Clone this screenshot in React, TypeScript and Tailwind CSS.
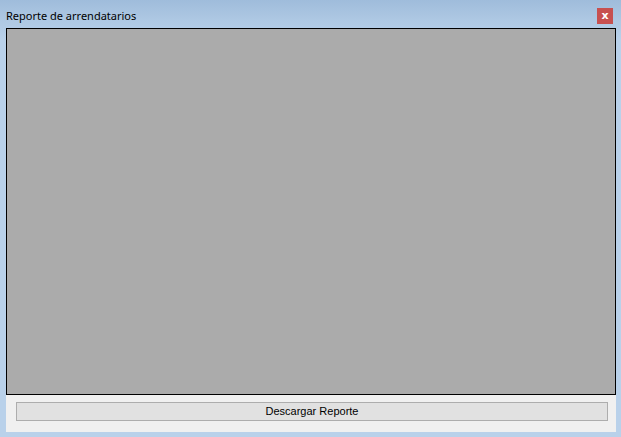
import React from "react";

export default function App() {
  return (
    <div className="w-[621px] h-[437px] flex flex-col bg-[linear-gradient(to_bottom,#9fbcdb_0px,#aec8e3_20px,#b9d1ea_40px,#b9d1ea_100%)] overflow-hidden">
      <div className="h-[28px] flex items-start shrink-0">
        <div
          className="pl-[6px] pt-[8px] text-[11px] leading-[15px] text-black"
          style={{ fontFamily: '"Segoe UI", "Noto Sans", "Open Sans", sans-serif' }}
        >
          Reporte de arrendatarios
        </div>
        <div className="ml-auto mr-[8px] mt-[8px] w-[16px] h-[16px] bg-[#c75050] flex items-center justify-center">
          <span
            className="text-white text-[11px] font-bold leading-none -mt-[1px]"
            style={{ fontFamily: '"DejaVu Sans", sans-serif' }}
          >
            x
          </span>
        </div>
      </div>
      <div className="ml-[6px] mr-[5px] mb-[5px] flex-1 bg-[#f0f0f0] flex flex-col">
        <div className="h-[367px] border border-black bg-[#ababab] shrink-0" />
        <div className="flex pl-[10px] pr-[8px] pt-[7px]">
          <div
            className="flex-1 h-[19px] border border-[#adadad] bg-[#e1e1e1] flex items-center justify-center text-[11px] text-black"
            style={{ fontFamily: '"Liberation Sans", Arial, sans-serif' }}
          >
            Descargar Reporte
          </div>
        </div>
      </div>
    </div>
  );
}
